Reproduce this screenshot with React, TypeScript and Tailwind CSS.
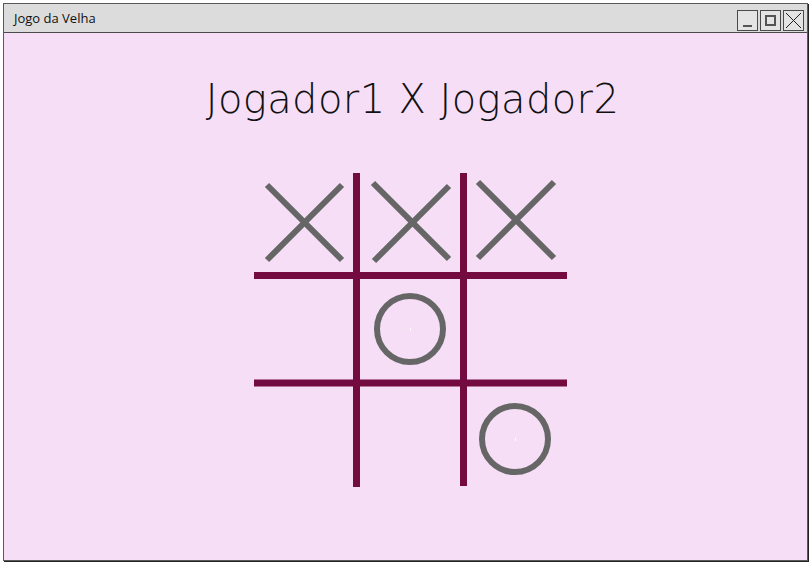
import React from "react";

function WinButton({ children }: { children: React.ReactNode }) {
  return (
    <div className="w-[21px] h-[21px] border border-[#4a4a4a] bg-[#e4e4e4] flex items-center justify-center">
      {children}
    </div>
  );
}

export default function App() {
  return (
    <div className="w-[810px] h-[563px] bg-white pt-[3px] pl-[3px]" style={{ fontFamily: '"Open Sans", "Noto Sans", sans-serif' }}>
      <div className="w-[805px] h-[558px] border border-[#5a5a5a] shadow-[1px_1px_0_#222] flex flex-col">
        <div className="h-[29px] bg-[#dcdcdc] border-b border-[#4a4a4a] flex items-center justify-between pl-[10px] pr-[3px] pt-[1px]">
          <span className="text-[13px] text-[#111] leading-none">Jogo da Velha</span>
          <div className="flex gap-[2px] mt-[3px]">
            <WinButton>
              <div className="w-[9px] h-[2px] bg-[#555] mt-[11px]" />
            </WinButton>
            <WinButton>
              <div className="w-[11px] h-[11px] border-2 border-[#555]" />
            </WinButton>
            <WinButton>
              <svg width="17" height="17" viewBox="0 0 17 17">
                <path d="M1 1 L16 16 M16 1 L1 16" stroke="#222" strokeWidth="1" />
              </svg>
            </WinButton>
          </div>
        </div>
        <div className="flex-1 bg-[#f7def7] flex flex-col">
          <div className="pl-[14px] flex justify-center mt-[42px]">
            <h1
              className="text-[40px] leading-[48px] text-[#111] tracking-[0.4px]"
              style={{ fontFamily: '"DejaVu Sans", sans-serif', fontWeight: 200 }}
            >
              Jogador1 X Jogador2
            </h1>
          </div>
          <svg className="ml-[250px] mt-[50px]" width="316" height="316" viewBox="0 0 316 316">
            <g stroke="#730a40" strokeWidth="7">
              <line x1="102.5" y1="0" x2="102.5" y2="314" />
              <line x1="209.5" y1="0" x2="209.5" y2="313" />
              <line x1="0" y1="102.5" x2="313" y2="102.5" />
              <line x1="0" y1="210" x2="313" y2="210" />
            </g>
            <g stroke="#666666" strokeWidth="6" fill="none">
              <path d="M13 12 L88 87 M88 12 L13 87" />
              <path d="M119 10 L195 86 M195 13 L120 88" />
              <path d="M224 9 L300 85 M300 9 L224 85" />
              <circle cx="156" cy="156" r="33" />
              <circle cx="261" cy="266" r="33" />
            </g>
            <rect x="156" y="155" width="1" height="3" fill="#ffffff" />
            <rect x="261" y="265" width="1" height="3" fill="#ffffff" />
          </svg>
        </div>
      </div>
    </div>
  );
}
